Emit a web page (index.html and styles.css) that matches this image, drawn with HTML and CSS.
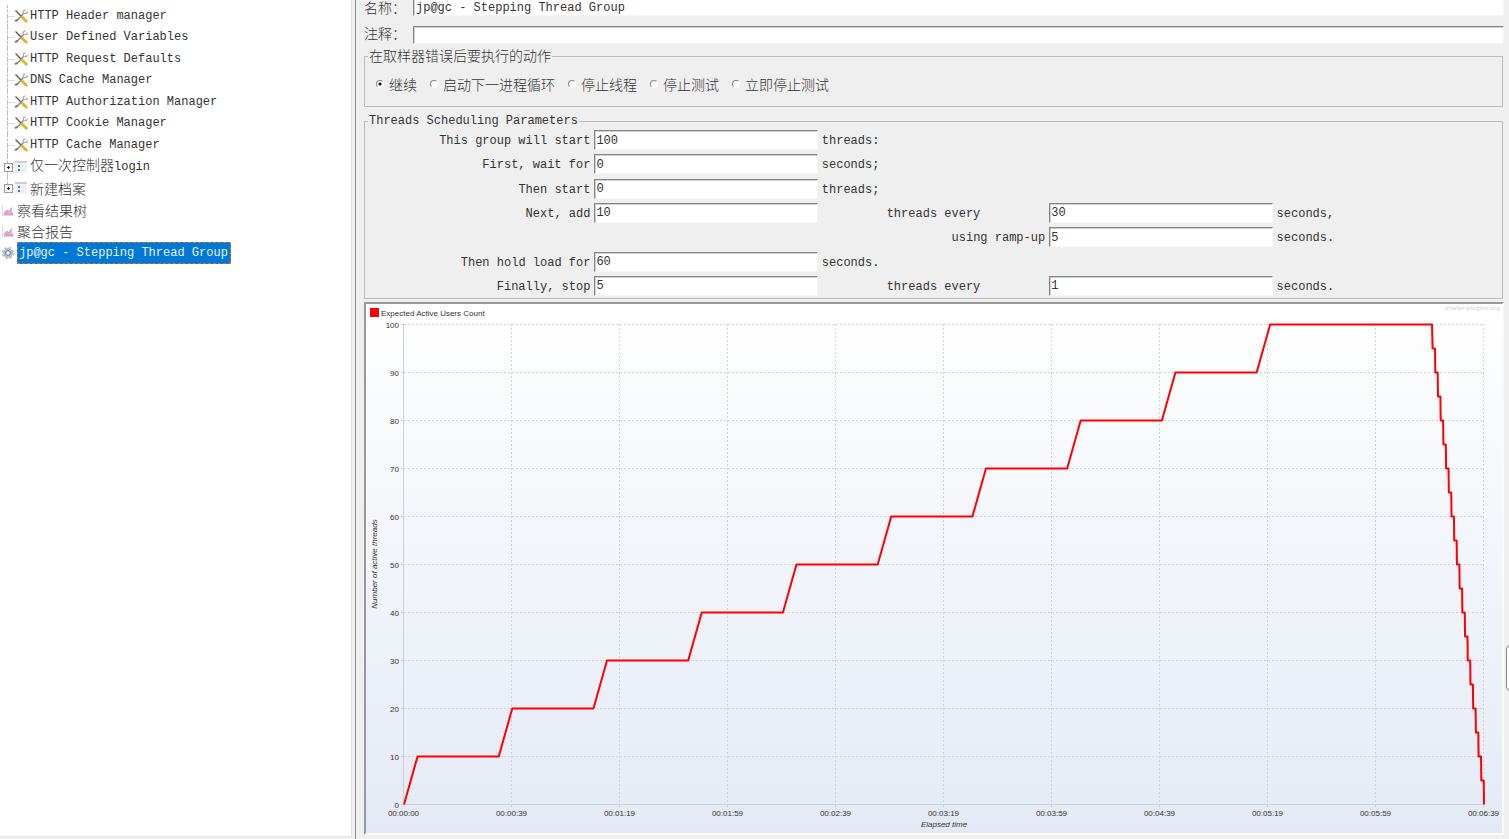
FILE: index.html
```html
<!DOCTYPE html>
<html lang="zh-CN">
<head>
    <meta charset="UTF-8">
    <meta name="viewport" content="width=device-width, initial-scale=1.0">
    <title>jp@gc - Stepping Thread Group</title>
    <link rel="stylesheet" href="styles.css">
</head>
<body>
    <svg class="defs" width="0" height="0">
        <symbol id="tools" viewBox="0 0 14 14">
            <path d="M3 11.5 10 4" stroke="#8d8d8d" stroke-width="1.6"/>
            <path d="M1 12.2 3.5 10.8" stroke="#777" stroke-width="2"/>
            <path d="M9 4.8 9.5 1.5 11.5 1M10 4.5 13 4.2 13.2 2.5" stroke="#b5b5b5" stroke-width="1.5" fill="none"/>
            <path d="M1.5 1.5 8 8" stroke="#555" stroke-width="1.3"/>
            <path d="M8 8 12.3 12.3" stroke="#e2b324" stroke-width="2.8" stroke-linecap="round"/>
        </symbol>
        <symbol id="controller" viewBox="0 0 14 14">
            <rect x="1" y="1" width="12" height="12" fill="#f1f3f7"/>
            <rect x="1" y="1" width="12" height="2" fill="#c9d0dc"/>
            <rect x="4" y="5" width="2" height="2" fill="#3c78c8"/>
            <rect x="4" y="9" width="2" height="2" fill="#3c78c8"/>
            <path d="M7 6H10M7 10H10" stroke="#dbe0ea"/>
        </symbol>
        <symbol id="report" viewBox="0 0 14 14">
            <path d="M1.5 2V12.5H13" stroke="#ddd8e6" fill="none"/>
            <path d="M3 12V10L6 7.5 8 8.5 11 4.5V12Z" fill="#e3b3e6"/>
            <path d="M3 10 6 7.5 8 8.5 11 4.5" stroke="#b48bd0" fill="none"/>
            <path d="M3 12 6 9.5 9 11 12 9V12Z" fill="#ee93b8"/>
        </symbol>
        <symbol id="gear" viewBox="0 0 14 14">
            <circle cx="7" cy="7" r="5.3" fill="none" stroke="#c0c0c0" stroke-width="2" stroke-dasharray="2.2 1.95"/>
            <circle cx="7" cy="7" r="4.4" fill="#c6c8cc" stroke="#b0b2b6"/>
            <circle cx="7" cy="7" r="2.4" fill="#f4f7fc" stroke="#4d6fb0"/>
        </symbol>
    </svg>

    <nav class="tree">
        <ul>
            <li class="child"><svg><use href="#tools"/></svg><span>HTTP Header manager</span></li>
            <li class="child"><svg><use href="#tools"/></svg><span>User Defined Variables</span></li>
            <li class="child"><svg><use href="#tools"/></svg><span>HTTP Request Defaults</span></li>
            <li class="child"><svg><use href="#tools"/></svg><span>DNS Cache Manager</span></li>
            <li class="child"><svg><use href="#tools"/></svg><span>HTTP Authorization Manager</span></li>
            <li class="child"><svg><use href="#tools"/></svg><span>HTTP Cookie Manager</span></li>
            <li class="child"><svg><use href="#tools"/></svg><span>HTTP Cache Manager</span></li>
            <li class="child closed"><svg><use href="#controller"/></svg><span><b class="cn">仅一次控制器</b>login</span></li>
            <li class="child closed last"><svg><use href="#controller"/></svg><span class="cn">新建档案</span></li>
            <li><svg><use href="#report"/></svg><span class="cn">察看结果树</span></li>
            <li><svg><use href="#report"/></svg><span class="cn">聚合报告</span></li>
            <li><svg><use href="#gear"/></svg><span class="selected">jp@gc - Stepping Thread Group</span></li>
        </ul>
    </nav>

    <main class="panel">
        <div class="field name">
            <label class="cn" for="name">名称：</label>
            <input type="text" id="name" value="jp@gc - Stepping Thread Group">
        </div>
        <div class="field">
            <label class="cn" for="comment">注释：</label>
            <input type="text" id="comment">
        </div>

        <fieldset class="actions cn">
            <legend>在取样器错误后要执行的动作</legend>
            <div class="radios">
                <label><input type="radio" name="action" checked>继续</label>
                <label><input type="radio" name="action">启动下一进程循环</label>
                <label><input type="radio" name="action">停止线程</label>
                <label><input type="radio" name="action">停止测试</label>
                <label><input type="radio" name="action">立即停止测试</label>
            </div>
        </fieldset>

        <fieldset class="params">
            <legend>Threads Scheduling Parameters</legend>
            <div class="grid">
                <label class="first" for="total">This group will start</label>
                <input type="text" id="total" value="100">
                <span>threads:</span>

                <label class="first" for="wait">First, wait for</label>
                <input type="text" id="wait" value="0">
                <span>seconds;</span>

                <label class="first" for="initial">Then start</label>
                <input type="text" id="initial" value="0">
                <span>threads;</span>

                <label class="first" for="add">Next, add</label>
                <input type="text" id="add" value="10">
                <label class="center" for="addEvery">threads every</label>
                <input type="text" id="addEvery" value="30">
                <span>seconds,</span>

                <label class="ramp" for="ramp">using ramp-up</label>
                <input type="text" id="ramp" value="5">
                <span>seconds.</span>

                <label class="first" for="hold">Then hold load for</label>
                <input type="text" id="hold" value="60">
                <span>seconds.</span>

                <label class="first" for="stop">Finally, stop</label>
                <input type="text" id="stop" value="5">
                <label class="center" for="stopEvery">threads every</label>
                <input type="text" id="stopEvery" value="1">
                <span>seconds.</span>
            </div>
        </fieldset>

        <div class="chart">
            <svg id="chart"></svg>
        </div>
    </main>
    <div class="handle"></div>

    <script>
        const chart = document.getElementById('chart');
        const times = ['00:00:00', '00:00:39', '00:01:19', '00:01:59', '00:02:39', '00:03:19',
            '00:03:59', '00:04:39', '00:05:19', '00:05:59', '00:06:39'];
        const duration = 399;

        // [seconds, threads]
        const points = [[0, 0]];
        for (let i = 0; i < 10; i++) {
            points.push([i * 35 + 5, (i + 1) * 10]);
            points.push([i * 35 + 35, (i + 1) * 10]);
        }
        points.pop();
        points.push([379.8, 100]);
        for (let i = 0; i < 19; i++) {
            points.push([380 + i, 95 - i * 5]);
            points.push([380.9 + i, 95 - i * 5]);
        }
        points.push([duration, 0]);

        function add(tag, attrs, text) {
            const el = document.createElementNS('http://www.w3.org/2000/svg', tag);
            for (const key in attrs) el.setAttribute(key, attrs[key]);
            if (text) el.textContent = text;
            chart.appendChild(el);
        }

        function drawChart() {
            const width = chart.clientWidth;
            const height = chart.clientHeight;
            const left = 38, right = width - 18, top = 20, bottom = height - 29;
            const x = s => left + (right - left) * s / duration;
            const y = n => bottom + 0.5 - (bottom - top) * n / 100;
            chart.innerHTML = '';

            add('rect', { x: 4, y: 4, width: 9, height: 9, fill: '#f00' });
            add('text', { x: 15, y: 12 }, 'Expected Active Users Count');
            add('text', { x: width - 2, y: 6, class: 'mark' }, 'jmeter-plugins.org');

            for (let n = 0; n <= 100; n += 10) {
                const gy = Math.floor(y(n)) + 0.5;
                if (n > 0) add('line', { x1: left, y1: gy, x2: right, y2: gy, class: 'gridline' });
                add('line', { x1: left - 3, y1: gy, x2: left, y2: gy, class: 'axis' });
                add('text', { x: left - 5, y: gy + 3, class: 'count' }, String(n));
            }
            times.forEach((time, i) => {
                const gx = Math.floor(left + (right - left) * i / 10) - 0.5;
                if (i > 0) add('line', { x1: gx, y1: top, x2: gx, y2: bottom, class: 'gridline' });
                add('line', { x1: gx, y1: bottom, x2: gx, y2: bottom + 3, class: 'axis' });
                add('text', { x: gx, y: bottom + 12, class: 'time' }, time);
            });
            add('path', { d: `M${left - 0.5} ${top}V${bottom + 0.5}H${right}`, class: 'axis' });
            add('text', { x: (left + right) / 2, y: bottom + 23, class: 'title' }, 'Elapsed time');
            add('text', { transform: `translate(11 ${(top + bottom) / 2}) rotate(-90)`, class: 'title' }, 'Number of active threads');
            add('polyline', { points: points.map(p => x(p[0]) + ',' + y(p[1])).join(' '), class: 'series' });
        }

        drawChart();
        window.addEventListener('resize', drawChart);
    </script>
</body>
</html>
```
FILE: styles.css
```css
* {
    box-sizing: border-box;
}
body {
    margin: 0;
    height: 100vh;
    display: flex;
    overflow: hidden;
    background: #efefef;
    color: #333;
    font: 12px/18px "Liberation Mono", "Noto Sans CJK SC", monospace;
}
.defs {
    position: absolute;
}
.cn {
    font-size: 14px;
    font-weight: 300;
    font-family: "Noto Sans CJK SC", sans-serif;
}
.tree {
    flex: 0 0 352px;
    margin-bottom: 2px;
    background: #fff;
    border-right: 1px solid #e0e0e0;
    border-bottom: 1px solid #e3e3e3;
}
.tree ul {
    display: grid;
    grid-template-rows: repeat(12, 1fr);
    height: 264px;
    margin: 0;
    padding: 5px 0 0 1px;
    list-style: none;
}
.tree li {
    position: relative;
    display: flex;
    align-items: center;
    gap: 2px;
    white-space: nowrap;
}
.tree li svg {
    width: 14px;
    height: 14px;
}
.tree li > span {
    line-height: 20px;
}
.tree .cn {
    line-height: 16px;
}
.tree .child {
    padding-left: 13px;
}
.tree .child::before {
    content: "";
    position: absolute;
    left: 6px;
    top: 0;
    width: 7px;
    height: 50%;
    border-left: 1px dashed #bbb;
    border-bottom: 1px solid #ddd;
}
.tree .child:not(.last)::after {
    content: "";
    position: absolute;
    left: 6px;
    top: 50%;
    height: 50%;
    border-left: 1px dashed #bbb;
}
/* expand box in front of the branch line */
.tree .closed > span::before {
    content: "";
    position: absolute;
    z-index: 1;
    left: 3px;
    top: 7px;
    width: 7px;
    height: 7px;
    border: 1px solid #999;
    background:
        linear-gradient(#222, #222) center / 3px 1px no-repeat,
        linear-gradient(#222, #222) center / 1px 3px no-repeat,
        #fff;
}
.tree .selected {
    height: 22px;
    padding: 0 3px 0 2px;
    line-height: 22px;
    color: #e6f2ff;
    background: #0078d7;
    outline: 1px dashed #c87830;
    outline-offset: -1px;
}
.panel {
    flex: 1;
    min-width: 0;
    display: flex;
    flex-direction: column;
    margin-left: 3px;
    padding: 0 5px 4px 8px;
    border-left: 1px solid #8c8c8c;
}
.field {
    display: flex;
    height: 18px;
    margin-bottom: 3px;
}
.field.name {
    height: 16px;
    margin-bottom: 10px;
}
.field label {
    flex: 0 0 49px;
    line-height: 14px;
}
input[type="text"] {
    width: 100%;
    min-width: 0;
    height: 20px;
    padding: 1px 1px 0;
    border: 1px solid;
    border-color: #858585 #f6f6f6 #f6f6f6 #858585;
    border-radius: 0;
    background: #fff;
    box-shadow: inset 1px 1px #d0d0d0;
    color: #333;
    font: inherit;
    outline: none;
}
.field input[type="text"] {
    height: 100%;
    padding: 0 2px;
}
.field.name input[type="text"] {
    border-top: 0;
    box-shadow: inset 1px 0 #d0d0d0;
}
fieldset {
    min-width: 0;
    margin: 0 1px 5px 0;
    padding: 0;
    border: 1px solid #bdbdbd;
}
legend {
    margin-left: 3px;
    padding: 0 1px;
    height: 18px;
    line-height: 18px;
}
.actions {
    height: 60px;
}
.actions legend {
    line-height: 16px;
}
.radios {
    display: flex;
    gap: 13px;
    padding: 10px 11px;
}
.radios label {
    display: flex;
    align-items: center;
    gap: 5px;
    line-height: 18px;
}
.radios input {
    appearance: none;
    width: 8px;
    height: 8px;
    margin: 0;
    border: 1px solid;
    border-color: #888 #fff #fff #888;
    border-radius: 50%;
    background: #fff;
}
.radios input:checked {
    background: radial-gradient(circle, #111 0 1px, #fff 2px);
}
.params {
    margin-bottom: 3px;
}
.grid {
    display: grid;
    grid-template-columns: repeat(5, 1fr);
    grid-auto-rows: 20px;
    column-gap: 4px;
    align-content: space-between;
    height: 168px;
    padding: 0 2px 2px;
    line-height: 22px;
    white-space: nowrap;
}
.grid .first {
    grid-column: 1;
    text-align: right;
}
.grid .center {
    text-align: center;
}
.grid .ramp {
    grid-column: 3;
    text-align: right;
}
.chart {
    flex: 1;
    min-height: 0;
    border: 2px solid;
    border-color: #999 #fafafa #fafafa #999;
    background: linear-gradient(#fff, #e4eaf5);
}
.chart svg {
    display: block;
    width: 100%;
    height: 100%;
    font: 8px "Liberation Sans", sans-serif;
    fill: #333;
}
.chart .gridline {
    stroke: #cfd4dc;
    stroke-dasharray: 2 2;
}
.chart .axis {
    fill: none;
    stroke: #c9d0da;
}
.chart .count {
    text-anchor: end;
}
.chart .time {
    text-anchor: middle;
}
.chart .title {
    font-style: italic;
    text-anchor: middle;
}
.chart .mark {
    font: 6px "DejaVu Sans", sans-serif;
    text-anchor: end;
    fill: #cfd2d8;
}
.chart .series {
    fill: none;
    stroke: #f00;
    stroke-width: 2;
    stroke-linejoin: round;
}
.handle {
    position: absolute;
    right: -5px;
    top: 645px;
    width: 8px;
    height: 46px;
    border: 1px solid #888;
    border-radius: 4px;
    background: #fff;
}
```
